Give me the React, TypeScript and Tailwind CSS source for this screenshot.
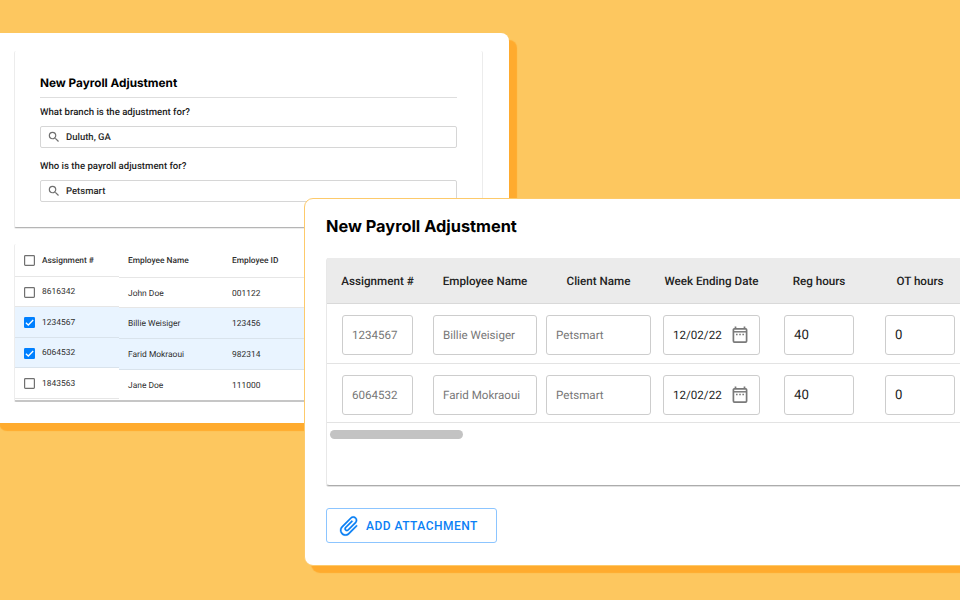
import React from "react";

const columns = [
  { label: "Assignment #", box: "w-[71px]" },
  { label: "Employee Name", box: "ml-5 w-[104px]" },
  { label: "Client Name", box: "ml-[9px] w-[105px]" },
  { label: "Week Ending Date", box: "ml-3 w-[97px]" },
  { label: "Reg hours", box: "ml-6 w-[70px]" },
  { label: "OT hours", box: "ml-[31px] w-[70px]" },
];

const adjustments = [
  ["1234567", "Billie Weisiger", "Petsmart", "12/02/22", "40", "0"],
  ["6064532", "Farid Mokraoui", "Petsmart", "12/02/22", "40", "0"],
];

const employees = [
  { assignment: "8616342", name: "John Doe", id: "001122", checked: false, left: "h-[30px]", right: "h-[30px]" },
  { assignment: "1234567", name: "Billie Weisiger", id: "123456", checked: true, left: "h-[31px]", right: "h-[31px]" },
  { assignment: "6064532", name: "Farid Mokraoui", id: "982314", checked: true, left: "h-[30px]", right: "h-[31px]" },
  { assignment: "1843563", name: "Jane Doe", id: "111000", checked: false, left: "h-[31px]", right: "h-[30px]" },
];

function SearchIcon() {
  return (
    <svg viewBox="0 0 24 24" className="size-[14px] shrink-0" fill="#6f6f6f">
      <path d="M15.5 14h-.79l-.28-.27A6.471 6.471 0 0 0 16 9.5 6.5 6.5 0 1 0 9.5 16c1.61 0 3.09-.59 4.23-1.57l.27.28v.79l5 4.99L20.49 19l-4.99-5zm-6 0C7.01 14 5 11.99 5 9.5S7.01 5 9.5 5 14 7.01 14 9.5 11.99 14 9.5 14z" />
    </svg>
  );
}

function CalendarIcon() {
  return (
    <svg viewBox="0 0 16 18" className="h-[18px] w-4 shrink-0" fill="none" stroke="#7a7a7a">
      <rect x="1.4" y="2.8" width="13.2" height="13.3" rx="1" strokeWidth="1.7" />
      <path d="M3.5 .6V3M12.5 .6V3" strokeWidth="1.7" />
      <path d="M1.4 5.8h13.2" strokeWidth="1.5" />
      <path d="M4 8.6h1.6M7.2 8.6h1.6M10.4 8.6H12" strokeWidth="1.5" />
    </svg>
  );
}

function ClipIcon() {
  return (
    <svg viewBox="0 0 24 24" className="size-6 shrink-0 rotate-[45deg]" fill="#0a80f5" stroke="#0a80f5" strokeWidth=".25">
      <path d="M16.5 6v11.5c0 2.21-1.79 4-4 4s-4-1.79-4-4V5c0-1.38 1.12-2.5 2.5-2.5s2.5 1.12 2.5 2.5v10.5c0 .55-.45 1-1 1s-1-.45-1-1V6H10v9.5c0 1.38 1.12 2.5 2.5 2.5s2.5-1.12 2.5-2.5V5c0-2.21-1.79-4-4-4S7 2.79 7 5v12.5c0 3.04 2.46 5.5 5.5 5.5s5.5-2.46 5.5-5.5V6h-1.5z" />
    </svg>
  );
}

function Checkbox({ checked }: { checked: boolean }) {
  return (
    <svg viewBox="0 0 11 11" className="size-[11px] shrink-0" fill="none">
      {checked ? (
        <>
          <rect width="11" height="11" rx="1.2" fill="#0080ff" />
          <path d="M1.9 5.7 4.3 8 9.2 3" stroke="#fff" strokeWidth="1.3" />
        </>
      ) : (
        <rect x=".6" y=".6" width="9.8" height="9.8" rx=".8" stroke="#707070" strokeWidth="1.2" />
      )}
    </svg>
  );
}

function SearchField({ value }: { value: string }) {
  return (
    <div className="flex h-[22px] w-[417px] items-center gap-[5px] rounded-[2px] border border-[#d6d6d6] pl-1.5 text-[9.5px] font-medium text-[#2a2a2a]">
      <SearchIcon />
      <span className="pt-0.5">{value}</span>
    </div>
  );
}

function SearchWindow() {
  return (
    <section className="absolute top-[33px] -left-2 h-[390px] w-[517px] rounded-lg bg-white pt-[18px] pl-[22px] shadow-[7.5px_7.5px_1px_#ffab2e]">
      <div className="h-[177px] w-[469px] rounded-[2px] border-x border-b border-x-[#ececec] border-b-[#b5b5b5] pt-6 pl-[25px] shadow-[0_1px_0_#ececec]">
        <h2 className="h-[23px] w-[417px] border-b border-[#dedede] font-[Inter] text-[11.75px] leading-[17px] font-bold text-black">
          New Payroll Adjustment
        </h2>
        <p className="mt-[9px] mb-[7px] h-3 text-[9.6px] leading-3 font-medium text-[#1c1c1c]">What branch is the adjustment for?</p>
        <SearchField value="Duluth, GA" />
        <p className="mt-[13px] mb-[7px] h-3 text-[9.6px] leading-3 font-medium text-[#1c1c1c]">Who is the payroll adjustment for?</p>
        <SearchField value="Petsmart" />
      </div>

      <div className="mt-4 flex h-[158px] w-[469px] rounded-[2px] border-b-2 border-l border-b-[#c6c6c6] border-l-[#ededed] text-[8.45px] text-[#303030]">
        <div className="w-[104px]">
          <div className="flex h-[33px] items-center gap-[7px] border-b border-[#e6e6e6] pl-[9px] text-[8.35px] font-medium">
            <Checkbox checked={false} />
            <span className="pt-0.5 whitespace-nowrap">Assignment #</span>
          </div>
          {employees.map((e) => (
            <div
              key={e.assignment}
              className={`${e.left} ${e.checked ? "border-[#d9e3ec] bg-[#e9f4ff]" : "border-[#e6e6e6]"} flex items-center gap-[7px] border-b pt-px pl-[9px]`}
            >
              <Checkbox checked={e.checked} />
              <span className="pt-px">{e.assignment}</span>
            </div>
          ))}
        </div>
        <div className="flex-1">
          <div className="flex h-[34px] items-center border-b border-[#e6e6e6] pt-px pl-[9px] text-[8.35px] font-medium">
            <span className="w-[104px]">Employee Name</span>
            <span>Employee ID</span>
          </div>
          {employees.map((e) => (
            <div
              key={e.id}
              className={`${e.right} ${e.checked ? "border-[#d9e3ec] bg-[#e9f4ff]" : "border-[#e6e6e6]"} flex items-center border-b pt-[3px] pl-[9px] last:border-b-0`}
            >
              <span className="w-[104px]">{e.name}</span>
              <span>{e.id}</span>
            </div>
          ))}
        </div>
      </div>
    </section>
  );
}

function FieldValue({ index, value }: { index: number; value: string }) {
  if (index < 3) return <span className="pt-px text-[11.6px] text-[#777]">{value}</span>;
  if (index === 3)
    return (
      <>
        <span className="w-[59px] pt-px text-[11.6px] text-[#222]">{value}</span>
        <CalendarIcon />
      </>
    );
  return <span className="pt-px text-[13.2px] text-[#222]">{value}</span>;
}

function AdjustmentWindow() {
  return (
    <section className="absolute top-[198px] left-[304px] h-[368px] w-[680px] rounded-[9px] border border-[#fdca6b] bg-white pt-[17px] pl-[21px] shadow-[7px_7px_1px_#ffab2e]">
      <h1 className="h-[42px] font-[Inter] text-[16.35px] leading-5 font-bold text-black">New Payroll Adjustment</h1>
      <div className="h-[228px] w-[650px] rounded-[3px] border-b border-l border-b-[#acacac] border-l-[#e8e8e8] shadow-[0_1px_0_#e2e2e2]">
        <div className="flex h-[46px] items-center border-b border-[#d9d9d9] bg-[#ebebeb] pt-0.5 pl-[15px] text-[11.65px] font-medium text-[#222]">
          {columns.map((c) => (
            <div key={c.label} className={`${c.box} flex shrink-0 justify-center`}>
              <span className="whitespace-nowrap">{c.label}</span>
            </div>
          ))}
        </div>
        {adjustments.map((row, r) => (
          <div key={row[0]} className={`${r === 0 ? "h-[60px]" : "h-[59px]"} flex border-b border-[#e3e3e3] pt-[11px] pl-[15px]`}>
            {row.map((value, i) => (
              <div key={columns[i].label} className={`${columns[i].box} flex h-10 shrink-0 items-center rounded-[3px] border border-[#cdcdcd] pl-[9px]`}>
                <FieldValue index={i} value={value} />
              </div>
            ))}
          </div>
        ))}
        <div className="mt-[7px] ml-[3px] h-[9px] w-[133px] rounded-full bg-[#c3c3c3]" />
      </div>
      <button className="mt-[22px] flex h-[35px] w-[171px] items-center gap-[5px] rounded-[3px] border border-[#8cc5ff] pl-[10px] text-[12px] font-medium tracking-[0.48px] text-[#0a80f5]">
        <ClipIcon />
        <span className="pt-px whitespace-nowrap">ADD ATTACHMENT</span>
      </button>
    </section>
  );
}

export default function App() {
  return (
    <main className="relative h-[600px] w-[960px] overflow-hidden bg-[#fdc75f] font-[Roboto,sans-serif] [text-rendering:geometricPrecision]">
      <SearchWindow />
      <AdjustmentWindow />
    </main>
  );
}
